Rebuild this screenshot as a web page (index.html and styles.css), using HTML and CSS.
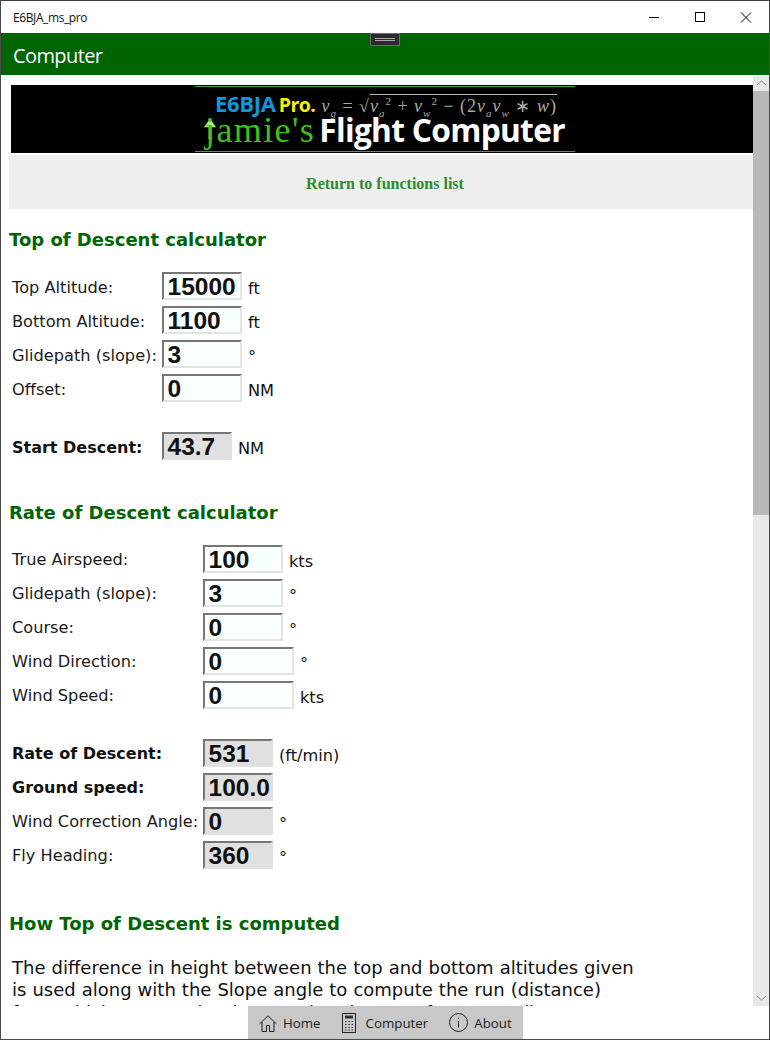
FILE: index.html
```html
<!DOCTYPE html>
<html lang="en">
<head>
<meta charset="utf-8">
<title>E6BJA_ms_pro</title>
<link rel="stylesheet" href="styles.css">
</head>
<body>
<div class="window">
  <header class="titlebar">
    <span class="app-name">E6BJA_ms_pro</span>
    <div class="win-controls">
      <svg class="win-icon" viewBox="0 0 46 33"><path d="M18 16.5h10" stroke="#000" fill="none"/></svg>
      <svg class="win-icon" viewBox="0 0 46 33"><rect x="18.5" y="11.5" width="9" height="9" stroke="#000" fill="none"/></svg>
      <svg class="win-icon" viewBox="0 0 46 33"><path d="M18 11.5l10 10M28 11.5l-10 10" stroke="#000" fill="none"/></svg>
    </div>
  </header>
  <div class="appbar">
    <span class="appbar-title">Computer</span>
    <div class="handle"><i></i><i></i></div>
  </div>
  <div class="viewport">
    <main class="content">
      <div class="banner">
        <div class="logo">
          <div class="logo-top">
            <span class="e6">E6BJA</span><span class="pro">Pro.</span>
            <span class="formula"><i>v<sub>g</sub></i> = √<span class="radicand"><i>v</i><sub><i>a</i></sub><sup>2</sup> + <i>v</i><sub><i>w</i></sub><sup>2</sup> − (2<i>v<sub>a</sub>v<sub>w</sub></i> ∗ <i>w</i>)</span></span>
          </div>
          <div class="logo-bottom">
            <svg class="plane" viewBox="0 0 16 22"><path d="M7.500 0L1 9h5v13h3V9h5z" fill="#a5f07f"/></svg>
            <span class="jamie">jamie's</span><span class="flight">Flight Computer</span>
          </div>
        </div>
      </div>
      <div class="return"><a href="#">Return to functions list</a></div>

      <h2 class="first">Top of Descent calculator</h2>
      <div class="form form-a">
        <div class="row"><label>Top Altitude:</label><span class="field entry">15000</span><span class="unit">ft</span></div>
        <div class="row"><label>Bottom Altitude:</label><span class="field entry">1100</span><span class="unit">ft</span></div>
        <div class="row"><label>Glidepath (slope):</label><span class="field entry">3</span><span class="unit">°</span></div>
        <div class="row"><label>Offset:</label><span class="field entry">0</span><span class="unit">NM</span></div>
      </div>
      <div class="form form-a result-block">
        <div class="row"><label class="strong">Start Descent:</label><span class="field out">43.7</span><span class="unit">NM</span></div>
      </div>

      <h2 class="second">Rate of Descent calculator</h2>
      <div class="form form-b">
        <div class="row"><label>True Airspeed:</label><span class="field entry">100</span><span class="unit">kts</span></div>
        <div class="row"><label>Glidepath (slope):</label><span class="field entry">3</span><span class="unit">°</span></div>
        <div class="row"><label>Course:</label><span class="field entry">0</span><span class="unit">°</span></div>
        <div class="row"><label>Wind Direction:</label><span class="field entry wide">0</span><span class="unit">°</span></div>
        <div class="row"><label>Wind Speed:</label><span class="field entry wide">0</span><span class="unit">kts</span></div>
      </div>
      <div class="form form-b result-block">
        <div class="row"><label class="strong">Rate of Descent:</label><span class="field out">531</span><span class="unit">(ft/min)</span></div>
        <div class="row"><label class="strong">Ground speed:</label><span class="field out">100.0</span></div>
        <div class="row"><label>Wind Correction Angle:</label><span class="field out">0</span><span class="unit">°</span></div>
        <div class="row"><label>Fly Heading:</label><span class="field out">360</span><span class="unit">°</span></div>
      </div>

      <h2 class="third">How Top of Descent is computed</h2>
      <p class="body-text">The difference in height between the top and bottom altitudes given is used along with the Slope angle to compute the run (distance) from which to start the descent, i.e. the Top of Descent distance. A</p>
    </main>
    <div class="scrollbar">
      <div class="arrow"><svg viewBox="0 0 17 16"><path d="M4 10l4.500-4 4.500 4" stroke="#8a8a8a" fill="none"/></svg></div>
      <div class="thumb"></div>
      <div class="track"></div>
      <div class="arrow"><svg viewBox="0 0 17 16"><path d="M4 6l4.500 4 4.500-4" stroke="#8a8a8a" fill="none"/></svg></div>
    </div>
  </div>
  <nav class="bottom">
    <div class="tabs">
      <a class="tab" href="#"><svg class="tab-icon home" viewBox="0 0 18 17"><path d="M0.500 9L9 0.800 17.500 9M3 7V16.500h4.500v-6h3v6H15V7" fill="none" stroke="#222"/></svg>Home</a>
      <a class="tab" href="#"><svg class="tab-icon calc" viewBox="0 0 14 20"><rect x="0.500" y="0.500" width="13" height="19" fill="none" stroke="#222"/><rect x="3" y="2.500" width="8" height="3" fill="#333"/><path d="M3 8.500h1.500M6.300 8.500h1.500M9.500 8.500h1.500M3 11.500h1.500M6.300 11.500h1.500M9.500 11.500h1.500M3 14.500h1.500M6.300 14.500h1.500M9.500 14.500h1.500M3 17h1.500M6.300 17h1.500M9.500 17h1.500" stroke="#333"/></svg>Computer</a>
      <a class="tab" href="#"><svg class="tab-icon about" viewBox="0 0 19 19"><circle cx="9.500" cy="9.500" r="9" fill="none" stroke="#222"/><path d="M9.500 8v6.500M9.500 4.500v1.500" stroke="#222"/></svg>About</a>
    </div>
  </nav>
</div>
</body>
</html>
```
FILE: styles.css
```css
* { box-sizing: border-box; }
html, body { margin: 0; padding: 0; background: #fff; }
body { width: 770px; height: 1040px; overflow: hidden; }
.window {
  width: 770px; height: 1040px; display: flex; flex-direction: column;
  border: 1px solid #4a4a4a; border-top-color: #3c3c3c; background: #fff; overflow: hidden;
}
.titlebar { height: 32px; flex: none; display: flex; align-items: center; justify-content: space-between; padding-left: 12px; background: #fff; }
.app-name { font: 12px "Open Sans", "Noto Sans", sans-serif; color: #111; letter-spacing: -0.400px; }
.win-controls { display: flex; height: 32px; }
.win-icon { width: 46px; height: 33px; display: block; }
.appbar { height: 42px; flex: none; background: #006400; display: flex; align-items: center; padding: 3px 12px 0; position: relative; }
.appbar-title { font: 20px "Open Sans", "Noto Sans", sans-serif; color: #fff; letter-spacing: -0.600px; }
.handle {
  position: absolute; left: 369px; top: 0; width: 30px; height: 13px; background: #2b2b2b; border: 1px solid #6d6d6d;
  display: flex; flex-direction: column; gap: 1px; align-items: center; justify-content: center;
}
.handle i { display: block; width: 20px; height: 1px; background: #a9a9a9; }
.viewport { height: 931px; flex: none; display: flex; overflow: hidden; }
.content { width: 752px; flex: none; height: 931px; overflow: hidden; padding: 10px 0 0 8px; font-family: "DejaVu Sans", Verdana, sans-serif; color: #111; }
.banner { margin-left: 2px; height: 68px; background: #000; display: flex; justify-content: center; padding-left: 6px; }
.logo { width: 380px; border-top: 1px solid #2fa84a; border-bottom: 1px solid #2fa84a; margin-top: 1px; height: 66px; display: flex; flex-direction: column; }
.logo-top { display: flex; align-items: baseline; height: 27px; padding: 6px 0 0 20px; white-space: nowrap; }
.e6 { font: bold 22px "Open Sans", sans-serif; color: #1296dc; line-height: 20px; letter-spacing: -0.300px; }
.pro { font: bold 19.500px "Open Sans", sans-serif; color: #f6f000; line-height: 20px; margin-left: 3px; letter-spacing: -0.500px; }
.formula { font: 18px "Liberation Serif", serif; color: #a8a8a8; margin-left: 6px; letter-spacing: 1px; line-height: 20px; }
.formula sub, .formula sup { font-size: 11px; line-height: 0; }
.radicand { border-top: 1px solid #bbb; padding-top: 1px; }
.logo-bottom { display: flex; align-items: center; height: 37px; padding-left: 8px; white-space: nowrap; position: relative; }
.plane { width: 15px; height: 22px; flex: none; margin-top: -8px; }
.jamie { font: 36px "Liberation Serif", serif; color: #3fc01a; margin: -5px 0 0 -13px; line-height: 36px; letter-spacing: 1.400px; }
.flight { font: bold 31.700px "Open Sans", sans-serif; color: #fff; margin: -5px 0 0 4px; line-height: 36px; letter-spacing: -0.700px; }
.return { margin-top: 2px; height: 54px; background: #eee; display: flex; align-items: center; justify-content: center; padding: 3px 0 0 8px; }
.return a { font: bold 16px "Liberation Serif", serif; color: #2e8b2e; text-decoration: none; }
h2 { margin: 0; font: bold 18px/22px "DejaVu Sans", sans-serif; color: #006400; }
h2.first { margin-top: 20px; }
h2.second { margin-top: 42px; }
h2.third { margin-top: 44px; }
.form { display: flex; flex-direction: column; gap: 6px; margin-left: 3px; font-size: 16.200px; }
.form-a { margin-top: 21px; }
.form-b { margin-top: 21px; }
.form .row { display: flex; align-items: center; height: 28px; }
.form-a label { width: 150px; flex: none; position: relative; top: 1px; }
.form-b label { width: 191px; flex: none; }
.form.result-block { margin-top: 30px; }
.form label { color: #1a1a1a; white-space: nowrap; }
.form label.strong { font-weight: bold; color: #111; font-size: 16px; }
.unit { margin-left: 6px; position: relative; top: 2px; }
.field {
  display: block; flex: none; height: 28px; width: 80px; padding: 0 3.500px; font: bold 24.500px/26px "Liberation Sans", Arial, sans-serif; color: #111;
  border: 2px solid; border-color: #767676 #e3e3e3 #e3e3e3 #767676; overflow: hidden; white-space: nowrap;
}
.entry { background: #f8fffc; }
.entry.wide { width: 91px; }
.out { width: 70px; background: #e0e0e0; border-color: #767676 #e0e0e0 #e0e0e0 #767676; }
.body-text { margin: 21.500px 0 0 3px; width: 630px; font-size: 18px; word-spacing: 0.300px; line-height: 22.500px; color: #111; }
.scrollbar { width: 17px; flex: none; display: flex; flex-direction: column; background: #e8e8e8; }
.arrow { height: 16px; flex: none; background: #e8e8e8; }
.arrow svg { display: block; width: 17px; height: 16px; }
.thumb { height: 424px; flex: none; background: #b8b8b8; }
.track { flex: 1; }
.bottom { flex: 1; display: flex; justify-content: center; background: #fff; }
.tabs { width: 275px; margin-left: 1px; background: #c8c8c8; display: flex; gap: 21px; align-items: center; padding-left: 11px; }
.tab { display: flex; align-items: center; gap: 6px; font: 13.300px "Open Sans", "Noto Sans", sans-serif; color: #1a1a1a; text-decoration: none; white-space: nowrap; }
.tab-icon { flex: none; display: block; }
.tab-icon.home { width: 18px; height: 17px; margin-top: 1px; }
.tab-icon.calc { width: 14px; height: 20px; margin-right: 4px; }
.tab-icon.about { width: 19px; height: 19px; }
```
